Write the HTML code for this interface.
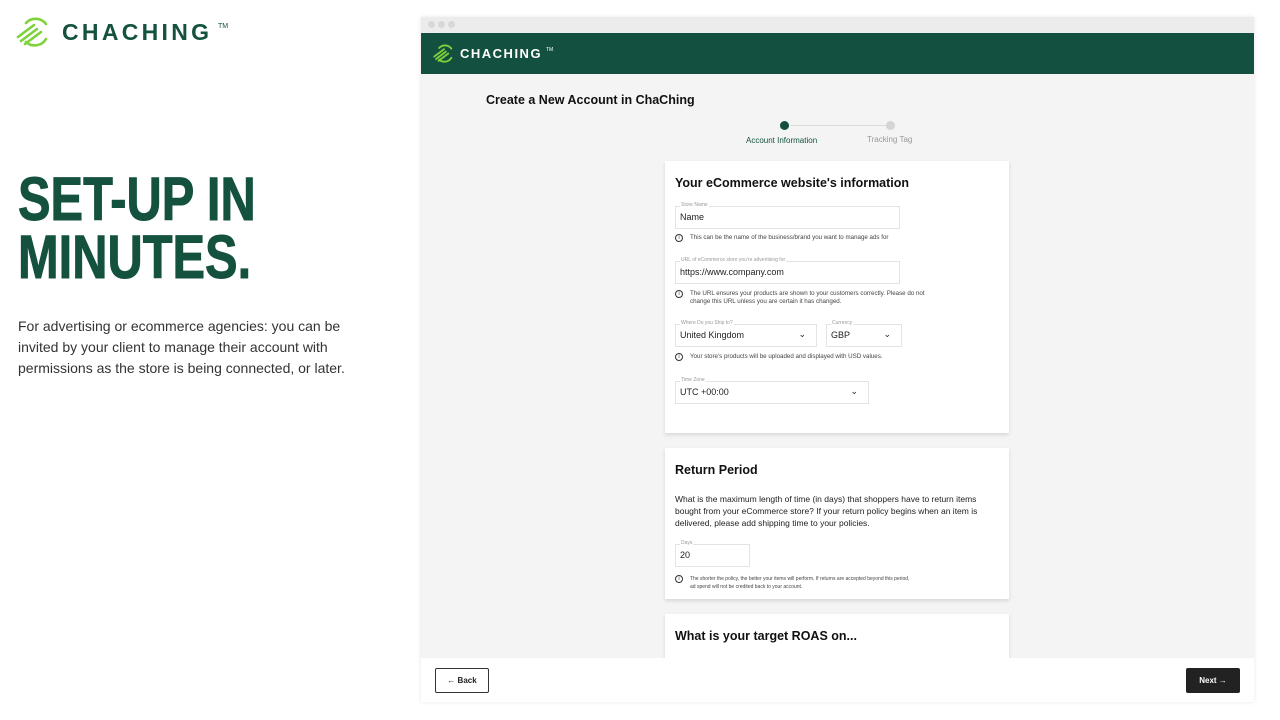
<!DOCTYPE html>
<html><head><meta charset="utf-8"><style>
*{margin:0;padding:0;box-sizing:border-box}
body{width:1280px;height:720px;background:#fff;font-family:"Liberation Sans",sans-serif;position:relative;overflow:hidden;color:#222}
.abs{position:absolute}
.h1{left:18px;top:170px;font-weight:bold;font-size:61px;line-height:58px;color:#14523f;transform:scaleX(.8);transform-origin:left top;white-space:nowrap;letter-spacing:0;-webkit-text-stroke:1px #14523f}
.p{left:18px;top:316px;width:345px;font-size:14px;line-height:21px;color:#333}
.frame{left:421px;top:17px;width:833px;height:685px;background:#f4f4f4;box-shadow:0 0 4px rgba(0,0,0,.1)}
.card{position:absolute;left:244px;width:344px;background:#fff;box-shadow:0 2px 4px rgba(0,0,0,.12)}
.fld{position:absolute;border:1px solid #e3e3e3;height:23px;font-size:9px;padding:5px 0 0 4px;color:#222}
.fld .lb{position:absolute;top:-5px;left:4px;background:#fff;font-size:5px;color:#999;padding:0 1px}
.fld .ch{position:absolute;right:10px;top:4px;font-size:9px}
.info{position:absolute;font-size:6.2px;color:#444;line-height:8px;padding-left:15px}
.info:before{content:"i";position:absolute;left:0;top:0;width:8px;height:8px;border:1px solid #333;border-radius:50%;font-size:6px;line-height:7px;text-align:center;box-sizing:border-box}
.ttl{position:absolute;left:10px;font-weight:bold;font-size:12.5px;color:#111}
</style></head><body>
<svg class="abs" style="left:16px;top:17px" width="36" height="30" viewBox="0 0 36 30"><g fill="none" stroke="#7ed23a" stroke-width="2.6" stroke-linecap="round"><path d="M30 7 A13 13 0 0 0 10 6"/><path d="M30 22 A13 13 0 0 1 10 25"/><path d="M2 20 L18 8"/><path d="M5 24 L21 12"/><path d="M9 27 L25 15"/></g></svg>
<div class="abs" style="left:62px;top:19px;font-weight:bold;font-size:23px;letter-spacing:3.3px;color:#14523f">CHACHING</div>
<div class="abs" style="left:218px;top:23px;font-size:7px;color:#14523f">TM</div>
<div class="abs h1">SET-UP IN<br>MINUTES.</div>
<div class="abs p">For advertising or ecommerce agencies: you can be invited by your client to manage their account with permissions as the store is being connected, or later.</div>

<div class="abs frame">
 <div class="abs" style="left:0;top:0;width:833px;height:16px;background:#ececec"></div>
 <div class="abs" style="left:7px;top:4px;width:7px;height:7px;border-radius:50%;background:#d8d8d8"></div>
 <div class="abs" style="left:17px;top:4px;width:7px;height:7px;border-radius:50%;background:#d8d8d8"></div>
 <div class="abs" style="left:27px;top:4px;width:7px;height:7px;border-radius:50%;background:#d8d8d8"></div>
 <div class="abs" style="left:0;top:16px;width:833px;height:41px;background:#14503f"></div>
 <svg class="abs" style="left:12px;top:27px" width="22" height="19" viewBox="0 0 36 30"><g fill="none" stroke="#7ed23a" stroke-width="3" stroke-linecap="round"><path d="M30 7 A13 13 0 0 0 10 6"/><path d="M30 22 A13 13 0 0 1 10 25"/><path d="M2 20 L18 8"/><path d="M5 24 L21 12"/><path d="M9 27 L25 15"/></g></svg>
 <div class="abs" style="left:39px;top:29px;font-weight:bold;font-size:13px;letter-spacing:1.5px;color:#fff">CHACHING</div>
 <div class="abs" style="left:125px;top:30px;font-size:5px;color:#fff">TM</div>
 <div class="abs" style="left:65px;top:76px;font-weight:bold;font-size:12.5px;color:#111">Create a New Account in ChaChing</div>
 <div class="abs" style="left:369px;top:108px;width:100px;height:1px;background:#ddd"></div>
 <div class="abs" style="left:359px;top:104px;width:9px;height:9px;border-radius:50%;background:#14503f"></div>
 <div class="abs" style="left:465px;top:104px;width:9px;height:9px;border-radius:50%;background:#d4d4d4"></div>
 <div class="abs" style="left:325px;top:119px;font-size:8px;color:#14503f">Account Information</div>
 <div class="abs" style="left:446px;top:118px;font-size:8px;color:#999">Tracking Tag</div>

 <div class="card" style="top:144px;height:272px">
  <div class="ttl" style="top:15px">Your eCommerce website's information</div>
  <div class="fld" style="left:10px;top:45px;width:225px"><span class="lb">Store Name</span>Name</div>
  <div class="info" style="left:10px;top:73px">This can be the name of the business/brand you want to manage ads for</div>
  <div class="fld" style="left:10px;top:100px;width:225px"><span class="lb">URL of eCommerce store you're advertising for</span>https://www.company.com</div>
  <div class="info" style="left:10px;top:129px;width:260px">The URL ensures your products are shown to your customers correctly. Please do not change this URL unless you are certain it has changed.</div>
  <div class="fld" style="left:10px;top:163px;width:142px"><span class="lb">Where Do you Ship to?</span>United Kingdom<span class="ch">&#8964;</span></div>
  <div class="fld" style="left:161px;top:163px;width:76px"><span class="lb">Currency</span>GBP<span class="ch">&#8964;</span></div>
  <div class="info" style="left:10px;top:192px">Your store's products will be uploaded and displayed with USD values.</div>
  <div class="fld" style="left:10px;top:220px;width:194px"><span class="lb">Time Zone</span>UTC +00:00<span class="ch">&#8964;</span></div>
 </div>

 <div class="card" style="top:431px;height:151px">
  <div class="ttl" style="top:15px">Return Period</div>
  <div class="abs" style="left:10px;top:45px;width:320px;font-size:8.5px;line-height:12px;color:#222">What is the maximum length of time (in days) that shoppers have to return items bought from your eCommerce store? If your return policy begins when an item is delivered, please add shipping time to your policies.</div>
  <div class="fld" style="left:10px;top:96px;width:75px"><span class="lb">Days</span>20</div>
  <div class="info" style="left:10px;top:127px;width:240px;font-size:5px;line-height:8px">The shorter the policy, the better your items will perform. If returns are accepted beyond this period, ad spend will not be credited back to your account.</div>
 </div>

 <div class="card" style="top:597px;height:44px">
  <div class="ttl" style="top:15px">What is your target ROAS on...</div>
 </div>

 <div class="abs" style="left:0;top:641px;width:833px;height:44px;background:#fff"></div>
 <div class="abs" style="left:14px;top:651px;width:54px;height:25px;border:1px solid #333;border-radius:2px;font-size:8px;font-weight:bold;line-height:23px;text-align:center">&#8592; Back</div>
 <div class="abs" style="left:765px;top:651px;width:54px;height:25px;background:#222;border-radius:2px;font-size:8px;font-weight:bold;line-height:25px;text-align:center;color:#fff">Next &#8594;</div>
</div>
</body></html>
